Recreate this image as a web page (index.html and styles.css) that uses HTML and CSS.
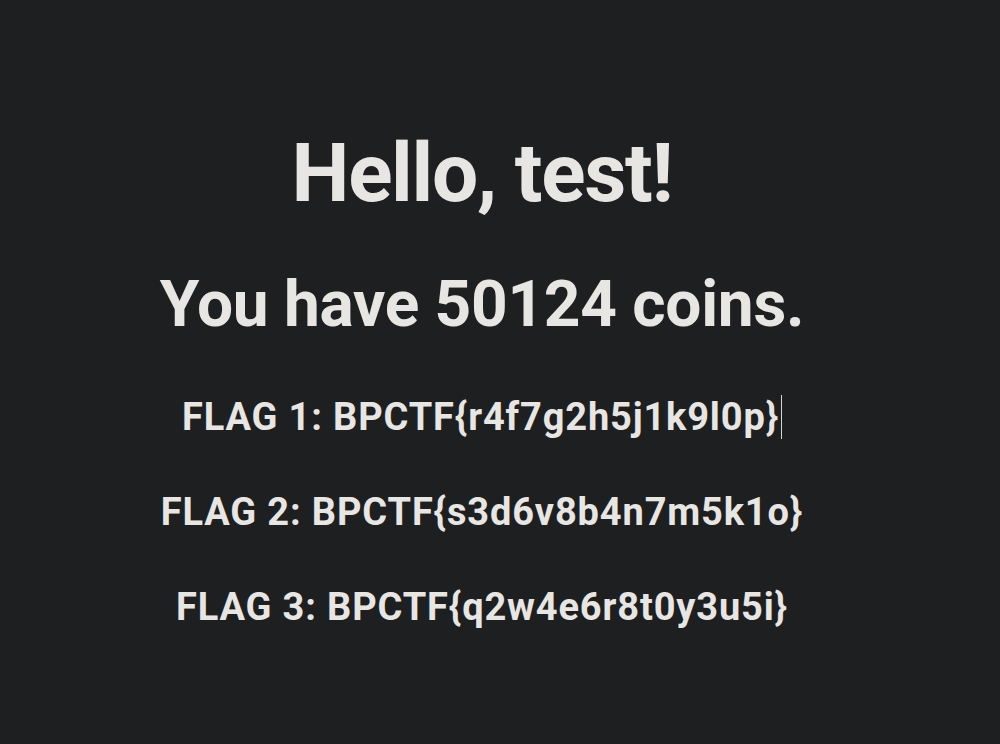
FILE: index.html
```html
<!DOCTYPE html>
<html>
<head>
<meta charset="utf-8">
<link rel="stylesheet" href="styles.css">
</head>
<body>
<main class="page">
  <h1 class="greeting">Hello, test!</h1>
  <h2 class="coins">You have 50124 coins.</h2>
  <p class="flag">FLAG 1: BPCTF{r4f7g2h5j1k9l0p}<span class="caret"></span></p>
  <p class="flag">FLAG 2: BPCTF{s3d6v8b4n7m5k1o}</p>
  <p class="flag">FLAG 3: BPCTF{q2w4e6r8t0y3u5i}</p>
</main>
</body>
</html>
```
FILE: styles.css
```css
html, body {
  margin: 0;
  padding: 0;
  background: #1e1f21;
}
body {
  font-family: Roboto, "Liberation Sans", sans-serif;
  color: #e8e6e3;
}
.page {
  display: flex;
  flex-direction: column;
  align-items: center;
  padding-top: 125px;
  width: 964px;
}
.greeting {
  margin: 0;
  font-size: 82px;
  font-weight: 700;
  line-height: 96px;
  letter-spacing: -1.3px;
}
.coins {
  margin: 46px 0 0;
  font-size: 64px;
  font-weight: 700;
  line-height: 76px;
  letter-spacing: -0.3px;
}
.flag {
  margin: 0;
  font-size: 38px;
  font-weight: 700;
  line-height: 44px;
  letter-spacing: 0.85px;
}
.coins + .flag { margin-top: 52px; }
.flag + .flag { margin-top: 51px; }
.caret {
  display: inline-block;
  width: 1px;
  height: 44px;
  margin-left: 2px;
  background: #d8d6d3;
  vertical-align: top;
}
```
